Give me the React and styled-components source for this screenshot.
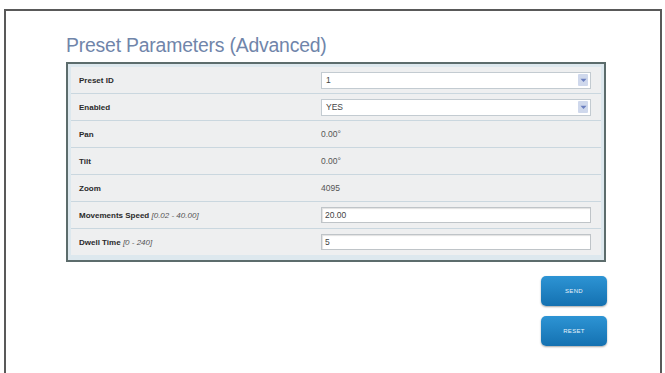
import React from 'react'
import styled, { createGlobalStyle } from 'styled-components';

const GlobalStyle = createGlobalStyle`
  html, body {
    margin: 0;
    background: #ffffff;
    overflow: hidden;
  }
`;

const Frame = styled.div`
  box-sizing: border-box;
  margin: 9px 3px 0 4px;
  height: 364px;
  border: 2px solid #595959;
  border-bottom: none;
  padding: 22px 0 0 60px;
  font-family: "Liberation Sans", Arial, sans-serif;
`;

const Title = styled.h1`
  margin: 0 0 5px;
  font-size: 19.4px;
  line-height: 24px;
  font-weight: normal;
  color: #7085aa;
  letter-spacing: -0.2px;
`;

const Panel = styled.div`
  box-sizing: border-box;
  width: 540px;
  height: 200px;
  border: 2px solid #5c6c6c;
  background: #dde8ee;
  padding: 3px;
`;

const Row = styled.div`
  display: grid;
  grid-template-columns: 250px 270px;
  align-items: center;
  height: 26px;
  background: #eeeff0;
  border-bottom: 1px solid #cad7df;
  &:last-child {
    border-bottom: none;
  }
`;

const Label = styled.div`
  padding-left: 8px;
  font-size: 8px;
  font-weight: bold;
  color: #2a2a2a;
`;

const Range = styled.span`
  font-weight: normal;
  font-style: italic;
  color: #555;
`;

const Value = styled.div`
  font-size: 8.5px;
  color: #555;
`;

const Select = styled.div`
  box-sizing: border-box;
  display: flex;
  align-items: center;
  justify-content: space-between;
  height: 17px;
  background: #fff;
  border: 1px solid #c3cbd1;
  padding: 0 2px 0 4px;
  font-size: 8.5px;
  color: #444;
`;

const Arrow = styled.span`
  display: flex;
  align-items: center;
  justify-content: center;
  width: 10px;
  height: 12px;
  background: #cfd8ec;
  border-radius: 1px;
`;

const Input = styled.div`
  box-sizing: border-box;
  height: 16px;
  background: #fff;
  border: 1px solid #bfc4c8;
  box-shadow: inset 1px 1px 1px rgba(0, 0, 0, 0.12);
  padding: 0 3px;
  line-height: 14px;
  font-size: 8.5px;
  color: #444;
`;

const Actions = styled.div`
  width: 541px;
  display: flex;
  flex-direction: column;
  align-items: flex-end;
  gap: 10px;
  margin-top: 14px;
`;

const Button = styled.button`
  width: 66px;
  height: 30px;
  border: none;
  border-radius: 5px;
  background: linear-gradient(#2d94d4, #1471b1);
  box-shadow: 0 1px 2px rgba(0, 0, 0, 0.35);
  color: #e8f3fb;
  font-family: "Liberation Sans", Arial, sans-serif;
  font-size: 6px;
  letter-spacing: 0.3px;
`;

const Chevron = () => (
  <svg width="7" height="5" viewBox="0 0 7 5">
    <path d="M0.5 0.8 L3.5 4 L6.5 0.8 Z" fill="#6b7fbf" />
  </svg>
);

const App = () => {
  return (
    <>
      <GlobalStyle />
      <Frame>
        <Title>Preset Parameters (Advanced)</Title>
        <Panel>
          <Row>
            <Label>Preset ID</Label>
            <Select>1<Arrow><Chevron /></Arrow></Select>
          </Row>
          <Row>
            <Label>Enabled</Label>
            <Select>YES<Arrow><Chevron /></Arrow></Select>
          </Row>
          <Row>
            <Label>Pan</Label>
            <Value>0.00°</Value>
          </Row>
          <Row>
            <Label>Tilt</Label>
            <Value>0.00°</Value>
          </Row>
          <Row>
            <Label>Zoom</Label>
            <Value>4095</Value>
          </Row>
          <Row>
            <Label>Movements Speed <Range>[0.02 - 40.00]</Range></Label>
            <Input>20.00</Input>
          </Row>
          <Row>
            <Label>Dwell Time <Range>[0 - 240]</Range></Label>
            <Input>5</Input>
          </Row>
        </Panel>
        <Actions>
          <Button>SEND</Button>
          <Button>RESET</Button>
        </Actions>
      </Frame>
    </>
  )
}

export default App
